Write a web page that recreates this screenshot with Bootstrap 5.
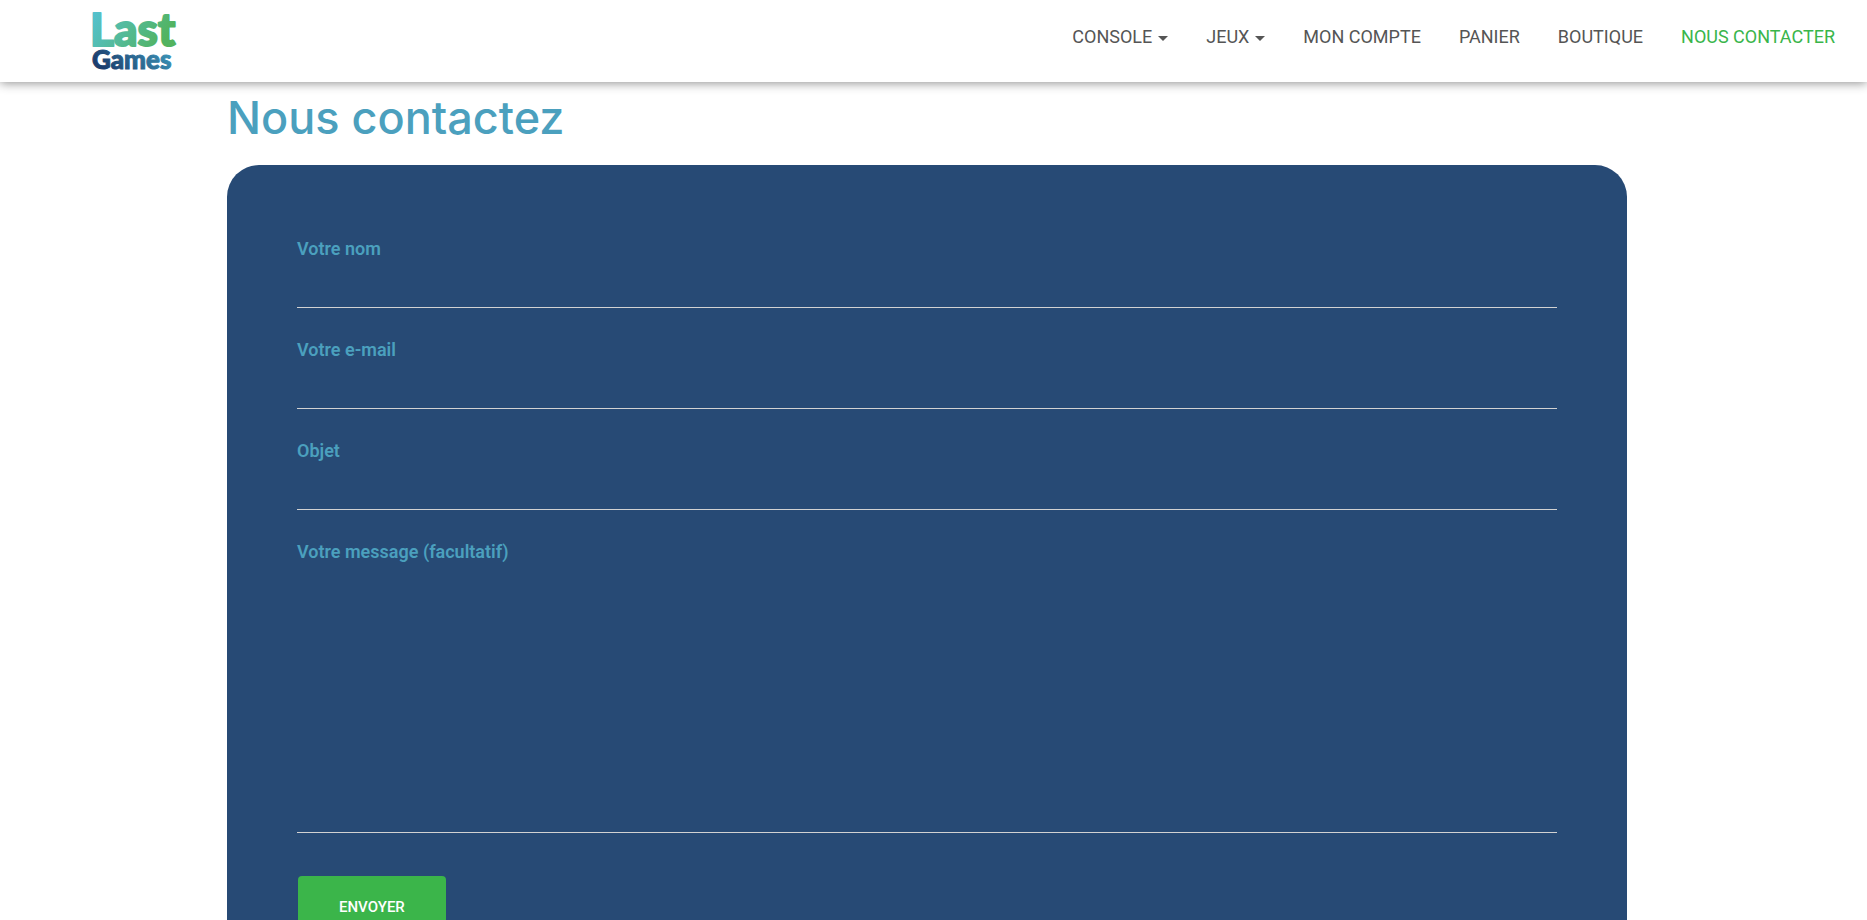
<!DOCTYPE html>
<html lang="fr">
<head>
<meta charset="utf-8">
<meta name="viewport" content="width=device-width, initial-scale=1">
<title>Nous contacter – Last Games</title>
<link href="https://cdn.jsdelivr.net/npm/bootstrap@5.3.0/dist/css/bootstrap.min.css" rel="stylesheet">
<style>
body { font-family: Roboto, "Liberation Sans", sans-serif; font-size: 18px; color: #555; overflow-x: hidden; }
.site-bar { padding: 0 17px 0 90px; min-height: 82px; box-shadow: 0 1px 10px rgba(0,0,0,.45); }
.site-bar .navbar-nav { gap: 8px; margin-bottom: 8px; }
.site-bar .nav-link { --bs-navbar-nav-link-padding-x: 15px; font-size: 18px; line-height: 28px; color: #555; text-transform: uppercase; }
.site-bar .nav-link.active { color: #39b54a; }
.site-bar .dropdown-toggle::after { border-top-width: 5px; border-left-width: 5px; border-right-width: 5px; margin-left: 6px; vertical-align: 2px; }
.page-body { padding-right: 13px; }
.contact-area { max-width: 1400px; }
.page-title { font-family: Inter, sans-serif; font-weight: 500; font-size: 45px; line-height: 58px; color: #4ba0be; padding: 7px 0 18px; }
.contact-panel { background: #274a75; border-radius: 32px; padding: 70px; }
.contact-panel .form-label { color: #4ba0be; font-weight: 600; font-size: 18px; line-height: 28px; }
.contact-panel .form-control { background: transparent; border: 0; border-bottom: 1px solid #d2d2d2; border-radius: 0; color: #fff; height: 45px; }
.contact-panel textarea.form-control { height: 267px; resize: none; }
.send-btn { background: #3bb54a; color: #fff; font-size: 15px; font-weight: 500; line-height: 24px; padding: 18px 40px; border-radius: 4px; margin: 15px 1px; }
</style>
</head>
<body>
<nav class="navbar navbar-expand-lg bg-white sticky-top site-bar">
  <a class="navbar-brand p-0 m-0" href="#" aria-label="Last Games">
    <svg width="90" height="82" viewBox="0 0 90 82" class="d-block">
      <defs>
        <linearGradient id="mint" x1="0" x2="1" y1="0" y2=".4"><stop offset="0" stop-color="#55c3dc"/><stop offset="1" stop-color="#52b35f"/></linearGradient>
        <linearGradient id="navy" x1="0" x2="1" y1=".4" y2="0"><stop offset="0" stop-color="#1d3e6e"/><stop offset="1" stop-color="#3f9fc0"/></linearGradient>
      </defs>
      <text x="0" y="46" font-family="Lato, sans-serif" font-weight="900" font-size="46" fill="url(#mint)" stroke="url(#mint)" stroke-width="2" stroke-linejoin="round">Last</text>
      <text x="2" y="69" font-family="Lato, sans-serif" font-weight="900" font-size="26" fill="url(#navy)" stroke="url(#navy)">Games</text>
    </svg>
  </a>
  <button class="navbar-toggler" type="button" data-bs-toggle="collapse" data-bs-target="#menu" aria-label="Menu"><span class="navbar-toggler-icon"></span></button>
  <div class="collapse navbar-collapse bg-white" id="menu">
    <ul class="navbar-nav ms-auto">
      <li class="nav-item dropdown"><a class="nav-link dropdown-toggle" href="#" data-bs-toggle="dropdown">Console</a></li>
      <li class="nav-item dropdown"><a class="nav-link dropdown-toggle" href="#" data-bs-toggle="dropdown">Jeux</a></li>
      <li class="nav-item"><a class="nav-link" href="#">Mon compte</a></li>
      <li class="nav-item"><a class="nav-link" href="#">Panier</a></li>
      <li class="nav-item"><a class="nav-link" href="#">Boutique</a></li>
      <li class="nav-item"><a class="nav-link active" href="#">Nous contacter</a></li>
    </ul>
  </div>
</nav>
<main class="page-body">
  <div class="contact-area mx-auto">
    <h1 class="page-title m-0">Nous contactez</h1>
    <form class="contact-panel">
      <div class="mb-4 pb-1"><label class="form-label m-0 d-block" for="nom">Votre nom</label><input class="form-control" id="nom" type="text"></div>
      <div class="mb-4 pb-1"><label class="form-label m-0 d-block" for="mail">Votre e-mail</label><input class="form-control" id="mail" type="email"></div>
      <div class="mb-4 pb-1"><label class="form-label m-0 d-block" for="objet">Objet</label><input class="form-control" id="objet" type="text"></div>
      <div class="mb-4 pb-1"><label class="form-label m-0 d-block" for="message">Votre message (facultatif)</label><textarea class="form-control" id="message"></textarea></div>
      <button class="btn send-btn" type="submit">ENVOYER</button>
    </form>
  </div>
</main>
<script src="https://cdn.jsdelivr.net/npm/bootstrap@5.3.0/dist/js/bootstrap.bundle.min.js"></script>
</body>
</html>
